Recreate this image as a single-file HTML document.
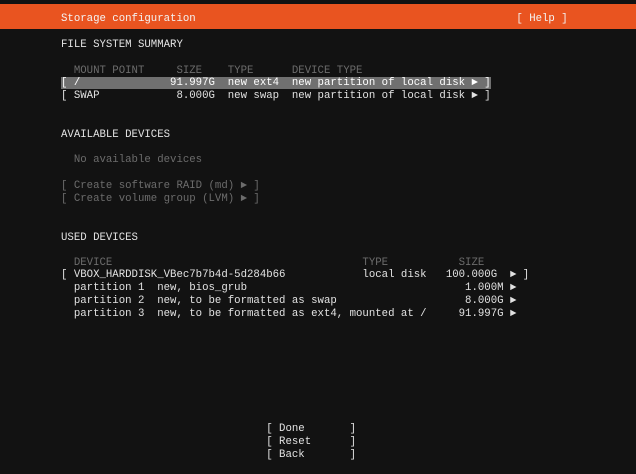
<!DOCTYPE html>
<html><head><meta charset="utf-8"><style>
html,body{margin:0;padding:0;background:#121212;width:636px;height:474px;overflow:hidden}
.bar{position:absolute;left:0;top:4px;width:636px;height:25px;background:#E95420}
pre{position:absolute;left:61px;margin:0;font-family:"Liberation Mono","DejaVu Sans Mono",monospace;font-size:10.7px;line-height:13px;color:#e2e2e2;white-space:pre}
.g{color:#6c6c6c}
.hl{background:#707070;color:#fff}
</style></head><body>
<div class="bar"></div>
<pre style="top:13px;color:#f4f4f4">Storage configuration                                                  [ Help ]</pre>
<pre style="top:39px">FILE SYSTEM SUMMARY</pre>
<pre style="top:65px" class="g">  MOUNT POINT     SIZE    TYPE      DEVICE TYPE</pre>
<pre style="top:77px"><span class="hl">[ /              91.997G  new ext4  new partition of local disk ► ]</span></pre>
<pre style="top:90px">[ SWAP            8.000G  new swap  new partition of local disk ► ]</pre>
<pre style="top:129px">AVAILABLE DEVICES</pre>
<pre style="top:154px" class="g">  No available devices</pre>
<pre style="top:180px" class="g">[ Create software RAID (md) ► ]</pre>
<pre style="top:193px" class="g">[ Create volume group (LVM) ► ]</pre>
<pre style="top:232px">USED DEVICES</pre>
<pre style="top:257px" class="g">  DEVICE                                       TYPE           SIZE</pre>
<pre style="top:269px">[ VBOX_HARDDISK_VBec7b7b4d-5d284b66            local disk   100.000G  ► ]</pre>
<pre style="top:282px">  partition 1  new, bios_grub                                  1.000M ►</pre>
<pre style="top:295px">  partition 2  new, to be formatted as swap                    8.000G ►</pre>
<pre style="top:308px">  partition 3  new, to be formatted as ext4, mounted at /     91.997G ►</pre>
<pre style="top:423px">                                [ Done       ]</pre>
<pre style="top:436px">                                [ Reset      ]</pre>
<pre style="top:449px">                                [ Back       ]</pre>
</body></html>
